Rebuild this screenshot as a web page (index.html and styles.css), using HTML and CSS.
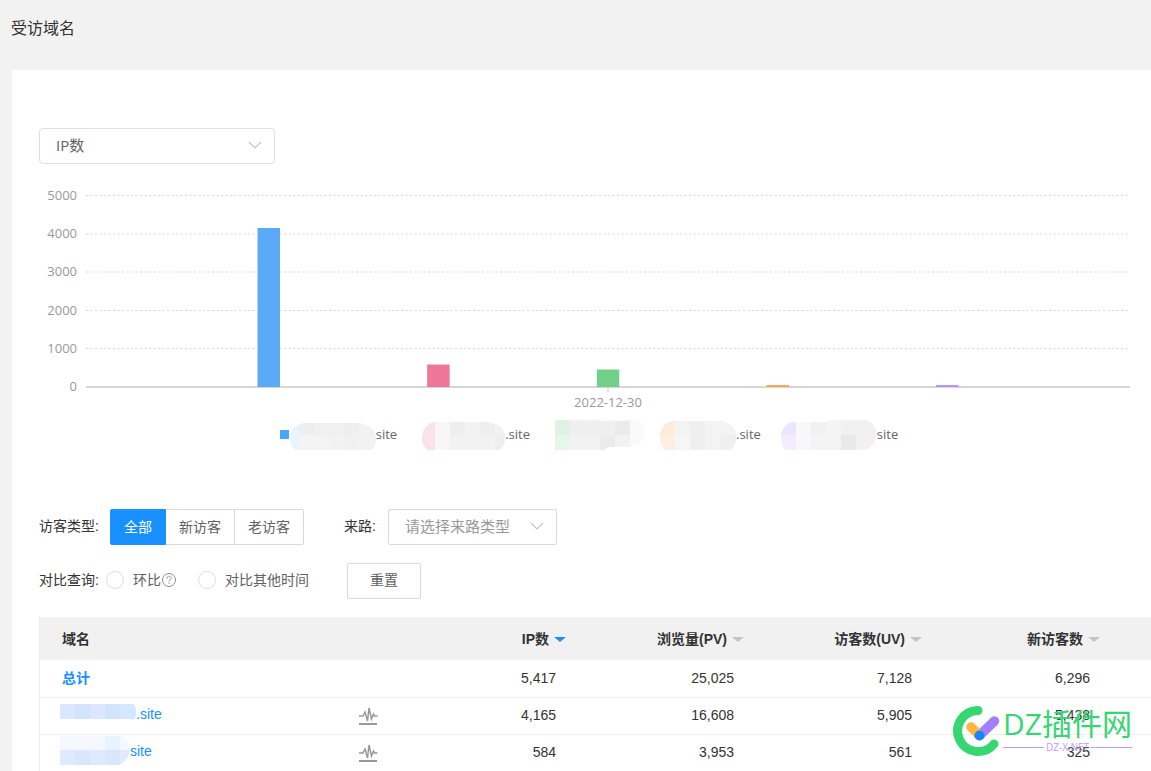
FILE: index.html
```html
<!DOCTYPE html>
<html lang="zh-CN">
<head>
<meta charset="utf-8">
<title>受访域名</title>
<meta name="viewport" content="width=device-width, initial-scale=1">
<link rel="stylesheet" href="styles.css">
</head>
<body>
<header class="page-head"><h1 class="page-title">受访域名</h1></header>
<main class="panel">
  <div class="select-wrap metric">
    <select class="select" aria-label="指标"><option>IP数</option></select>
    <svg class="chevron" viewBox="0 0 14 8" aria-hidden="true"><path d="M1 1l6 6 6-6"/></svg>
  </div>

  <section class="chart" aria-label="IP数">
    <div class="y-axis"><span>5000</span><span>4000</span><span>3000</span><span>2000</span><span>1000</span><span>0</span></div>
    <svg class="plot">
      <g class="grid">
        <line x1="0" x2="100%" y1="9.5" y2="9.5"/>
        <line x1="0" x2="100%" y1="48" y2="48"/>
        <line x1="0" x2="100%" y1="86" y2="86"/>
        <line x1="0" x2="100%" y1="124.5" y2="124.5"/>
        <line x1="0" x2="100%" y1="162.5" y2="162.5"/>
      </g>
      <line class="axis" x1="0" x2="100%" y1="201" y2="201"/>
      <line class="tick" x1="50%" x2="50%" y1="201" y2="206"/>
      <rect x="16.43%" y="42" width="2.15%" height="159" fill="#5aaaf8"/>
      <rect x="32.68%" y="178.5" width="2.15%" height="22.5" fill="#ee7798"/>
      <rect x="48.93%" y="183.5" width="2.15%" height="17.5" fill="#70d087"/>
      <rect x="65.18%" y="199" width="2.15%" height="2" fill="#fba755"/>
      <rect x="81.43%" y="199" width="2.15%" height="2" fill="#b994f0"/>
      <text class="x-label" x="50%" y="221">2022-12-30</text>
    </svg>
  </section>

  <ul class="legend">
    <li class="legend-item">
      <i class="swatch"></i>
      <svg class="mosaic" width="86" height="32" viewBox="0 0 86 32">
        <clipPath id="m1"><path d="M14 4H70Q86 7 86 20Q86 27 81 31H6Q0 27 0 18Q2 6 14 4Z"/></clipPath>
        <g clip-path="url(#m1)"><path fill="#f2f2f2" d="M0 0h86v32H0z"/><path fill="#e9f4ff" d="M0 0h9v32H0z"/><path fill="#eee" d="M9 0h15v16H9zM54 0h15v16H54z"/><path fill="#f0f0f0" d="M24 0h30v16H24zM54 16h15v16H54z"/><path fill="#f4f4f4" d="M9 16h30v16H9z"/></g>
      </svg><span>site</span>
    </li>
    <li class="legend-item">
      <svg class="mosaic" width="83" height="32" viewBox="0 0 83 32">
        <clipPath id="m2"><path d="M12 3H64Q83 5 83 18Q83 27 77 31H6Q0 27 0 18Q2 5 12 3Z"/></clipPath>
        <g clip-path="url(#m2)"><path fill="#f2f2f2" d="M0 0h83v32H0z"/><path fill="#fbe1e8" d="M0 0h13v32H0z"/><path fill="#f7f7f7" d="M13 0h15v32H13z"/><path fill="#eee" d="M28 0h15v16H28zM58 0h15v16H58zM73 16h10v16H73z"/></g>
      </svg><span>.site</span>
    </li>
    <li class="legend-item">
      <svg class="mosaic" width="90" height="32" viewBox="0 0 90 32">
        <clipPath id="m3"><path d="M0 1H44L50 -2H76Q90 2 90 13Q88 27 74 28H54L48 31H0Z"/></clipPath>
        <g clip-path="url(#m3)"><path fill="#f2f2f2" d="M0 0h75v32H0z"/><path fill="#fafafa" d="M75 0h15v32H75zM44 0h46v2H44z"/><path fill="#def3e4" d="M0 0h15v16H0z"/><path fill="#e5f6ea" d="M0 16h15v16H0z"/><path fill="#efefef" d="M15 2h45v14H15z"/><path fill="#ebebeb" d="M60 2h15v14H60zM45 16h15v16H45z"/></g>
      </svg>
    </li>
    <li class="legend-item">
      <svg class="mosaic" width="76" height="32" viewBox="0 0 76 32">
        <clipPath id="m4"><path d="M13 2H62Q76 6 76 17Q76 27 70 31H6Q0 27 0 16Q2 4 13 2Z"/></clipPath>
        <g clip-path="url(#m4)"><path fill="#f3f3f3" d="M0 0h76v32H0z"/><path fill="#ffebda" d="M0 0h15v16H0z"/><path fill="#ffefe0" d="M0 16h15v16H0z"/><path fill="#f6f6f6" d="M15 16h15v16H15z"/><path fill="#efefef" d="M30 0h15v32H30zM60 16h16v16H60z"/></g>
      </svg><span>.site</span>
    </li>
    <li class="legend-item">
      <svg class="mosaic" width="96" height="32" viewBox="0 0 96 32">
        <clipPath id="m5"><path d="M12 3H46L52 1H86Q96 6 96 16Q94 28 84 31H5Q0 27 0 16Q2 5 12 3Z"/></clipPath>
        <g clip-path="url(#m5)"><path fill="#f1f1f1" d="M0 0h96v32H0z"/><path fill="#ede5fb" d="M0 0h15v16H0z"/><path fill="#f2ecfc" d="M0 16h15v16H0z"/><path fill="#f8f8fa" d="M15 0h15v32H15z"/><path fill="#f4f4f4" d="M30 16h30v16H30zM45 0h15v16H45z"/><path fill="#e9e9e9" d="M60 16h15v16H60z"/></g>
      </svg><span>site</span>
    </li>
  </ul>

  <form class="filters">
    <div class="filter-row">
      <span class="label">访客类型:</span>
      <div class="segmented">
        <button type="button" class="seg active">全部</button><button type="button" class="seg">新访客</button><button type="button" class="seg">老访客</button>
      </div>
      <label class="label source-label" for="source">来路:</label>
      <div class="select-wrap source">
        <select class="select" id="source"><option>请选择来路类型</option></select>
        <svg class="chevron" viewBox="0 0 14 8" aria-hidden="true"><path d="M1 1l6 6 6-6"/></svg>
      </div>
    </div>
    <div class="filter-row">
      <span class="label compare-label">对比查询:</span>
      <label class="radio"><input type="radio" name="compare">环比<svg class="help" viewBox="0 0 16 16" aria-hidden="true"><circle cx="8" cy="8" r="6.5"/><path d="M5.8 6.6C5.8 3.6 10.2 3.6 10.2 6.4C10.2 8 8 8 8 9.6M8 10.8v1.2"/></svg></label>
      <label class="radio other"><input type="radio" name="compare">对比其他时间</label>
      <button type="reset" class="reset">重置</button>
    </div>
  </form>

  <table class="table">
    <colgroup><col><col class="num-col"><col class="num-col"><col class="num-col"><col class="num-col"><col class="end-col"></colgroup>
    <thead>
      <tr><th>域名</th><th class="sorted">IP数<i class="caret"></i></th><th>浏览量(PV)<i class="caret"></i></th><th>访客数(UV)<i class="caret"></i></th><th>新访客数<i class="caret"></i></th><th></th></tr>
    </thead>
    <tbody>
      <tr><td><a class="total" href="#">总计</a></td><td>5,417</td><td>25,025</td><td>7,128</td><td>6,296</td><td></td></tr>
      <tr>
        <td><div class="domain"><svg width="76" height="32" viewBox="0 0 76 32"><path fill="#dbe7fe" d="M0 5h74Q77 10 76 16L74 20H0z"/><path fill="#d2e3fe" d="M15 5h15v15H15zM45 5h15v15H45z"/><path fill="#d5e6ff" d="M60 5h14Q77 10 75 20H60z"/></svg><a href="#">.site</a>
        <svg class="pulse" viewBox="0 0 20 20"><path d="M1 11h4l2-4 2.500 9L11 3l2.500 11 2-5 1 2h3"/><path class="base" d="M1 19h18"/></svg></div></td>
        <td>4,165</td><td>16,608</td><td>5,905</td><td>5,438</td><td></td>
      </tr>
      <tr>
        <td><div class="domain"><svg width="70" height="32" viewBox="0 0 70 32"><path fill="#f5f8ff" d="M0 0h61Q71 3 70 14H0z"/><path fill="#e9f2ff" d="M45 0h15v14H45z"/><path fill="#dfeafe" d="M0 14h70Q69 24 59 29H0z"/><path fill="#d8e7fe" d="M15 14h15v15H15zM45 14h15v15H45z"/></svg><a href="#">site</a>
        <svg class="pulse" viewBox="0 0 20 20"><path d="M1 11h4l2-4 2.500 9L11 3l2.500 11 2-5 1 2h3"/><path class="base" d="M1 19h18"/></svg></div></td>
        <td>584</td><td>3,953</td><td>561</td><td>325</td><td></td>
      </tr>
    </tbody>
  </table>

  <div class="watermark">
    <svg class="wm-logo" viewBox="0 0 50 52" aria-hidden="true" fill="none" stroke-linecap="round">
      <path stroke="#36d673" stroke-width="9" d="M26 4.500A20.500 20.500 0 1 0 42 38"/>
      <path stroke="#a37fff" stroke-width="9.500" d="M27.500 29.500L42.500 15"/>
      <path stroke="#ffb63a" stroke-width="9.500" d="M19 21L27.500 29.500"/>
      <circle cx="27.500" cy="29.500" r="5" fill="#1885ff"/>
    </svg>
    <div class="wm-text"><span class="wm-name">DZ插件网</span><span class="wm-site">DZ-X.NET</span></div>
  </div>
</main>
</body>
</html>
```
FILE: styles.css
```css
* { box-sizing: border-box; }

body {
  margin: 0;
  min-height: 100vh;
  background: #f2f2f2;
  color: #333;
  font: 14px/20px "Liberation Sans", "Noto Sans CJK SC", sans-serif;
}

button, select { font: inherit; color: inherit; }
a { color: #1890ff; text-decoration: none; }

.page-head { height: 70px; padding: 17px 11px; }
.page-title { margin: 0; font-size: 16px; line-height: 24px; font-weight: 400; }

.panel {
  position: relative;
  margin-left: 12px;
  padding: 58px 0 0 27px;
  background: #fff;
}

.select-wrap { display: grid; align-items: center; height: 36px; }
.select-wrap > * { grid-area: 1 / 1; }
.select {
  appearance: none;
  width: 100%;
  height: 36px;
  padding: 0 16px 2px;
  border: 1px solid #d9d9d9;
  border-radius: 2px;
  background: #fff;
  font: 15px/20px "Open Sans", "Noto Sans CJK SC", sans-serif;
}
.chevron {
  justify-self: end;
  width: 14px;
  height: 8px;
  margin: 0 13px 2px 0;
  fill: none;
  stroke: #c0c4cc;
  stroke-width: 1.2;
  pointer-events: none;
}
.metric { width: 236px; }
.metric .select { border-color: #dcdfe6; border-radius: 4px; color: #606266; }
.source { width: 169px; }
.source .select { color: #999; }

.chart { display: flex; margin: 22px 21px 0 0; }
.y-axis {
  display: flex;
  flex-direction: column;
  justify-content: space-between;
  width: 38px;
  height: 209px;
  margin-right: 9px;
  text-align: right;
  color: #999;
  font: 13px/18px "Open Sans", sans-serif;
}
.plot { flex: 1; min-width: 0; height: 230px; }
.grid line { stroke: #d9d9d9; stroke-dasharray: 2.25 2.25; }
.axis { stroke: #d6d6d6; stroke-width: 2; }
.tick { stroke: #ccc; }
.x-label { fill: #999; font: 13px "Open Sans", sans-serif; text-anchor: middle; }

.legend {
  display: flex;
  justify-content: center;
  gap: 25px;
  height: 32px;
  margin: 3px 12px 0 0;
  padding: 0;
  list-style: none;
  color: #666;
  font: 13px/30px "Open Sans", sans-serif;
}
.legend-item { display: flex; }
.legend-item:nth-child(3) { margin-right: -10px; }
.legend-item:nth-child(5) { margin-left: -5px; }
.swatch { width: 9px; height: 9px; margin: 11px 1px 0 0; background: #4ba5f9; }

.filters { display: grid; gap: 18px; margin-top: 58px; }
.filter-row { display: flex; align-items: center; height: 36px; }
.label { width: 71px; padding-bottom: 3px; }
.compare-label { width: 67px; }
.source-label { width: 44px; margin-left: 40px; }

.segmented { display: flex; }
.seg, .reset {
  height: 36px;
  padding: 0 13px;
  border: 1px solid #d9d9d9;
  background: #fff;
  color: #606266;
}
.seg + .seg { border-left-width: 0; }
.seg + .seg + .seg { border-left-width: 1px; margin-left: -1px; border-radius: 0 2px 2px 0; }
.seg.active { border-color: #1890ff; border-radius: 2px 0 0 2px; background: #1890ff; color: #fff; }
.reset { width: 74px; margin-left: 38px; padding-bottom: 2px; border-radius: 2px; }

.radio { display: flex; align-items: center; padding-bottom: 3px; color: #606266; }
.radio input {
  appearance: none;
  width: 18px;
  height: 18px;
  margin: 0 9px 0 0;
  border: 1px solid #dcdfe6;
  border-radius: 50%;
}
.radio.other { margin-left: 21px; }
.help { width: 16px; height: 16px; fill: none; stroke: #8c8c8c; }

.table {
  width: 100%;
  margin-top: 18px;
  border-collapse: separate;
  border-spacing: 0;
  border-left: 1px solid #eee;
  table-layout: fixed;
}
.num-col { width: 178px; }
.end-col { width: 31px; }
.table th { height: 43px; padding: 0 20px 0 0; background: #f1f1f1; text-align: right; font-weight: 700; }
.table td { height: 37px; padding: 0 30px 2px 0; text-align: right; }
.table tr > :first-child { padding-left: 22px; text-align: left; }
.table tr + tr td { border-top: 1px solid #eee; }
.table .total { font-weight: 700; }
.caret {
  display: inline-block;
  margin-left: 5px;
  border: 6px solid transparent;
  border-top: 5px solid #c0c4cc;
  border-bottom: 0;
  vertical-align: 2px;
}
.sorted .caret { border-top-color: #1890ff; }
.domain { display: flex; align-items: center; height: 34px; margin-left: -2px; }
.domain a { padding-bottom: 2px; }
.pulse { width: 20px; height: 20px; margin-left: auto; fill: none; stroke: #999; stroke-width: 1.5; }
.pulse .base { stroke-width: 2; }

.watermark {
  position: absolute;
  right: 19px;
  bottom: 13px;
  display: flex;
  gap: 1px;
  pointer-events: none;
}
.wm-logo { width: 50px; height: 52px; }
.wm-text { display: flex; flex-direction: column; color: #36d673; }
.wm-name { font: 30px/36px "Open Sans", "Noto Sans CJK SC", sans-serif; }
.wm-site {
  display: flex;
  align-items: center;
  gap: 2px;
  color: #b79cff;
  font: 10px/10px "Open Sans", sans-serif;
}
.wm-site::before, .wm-site::after { content: ""; flex: 1; height: 1px; background: #b79cff; }
```
